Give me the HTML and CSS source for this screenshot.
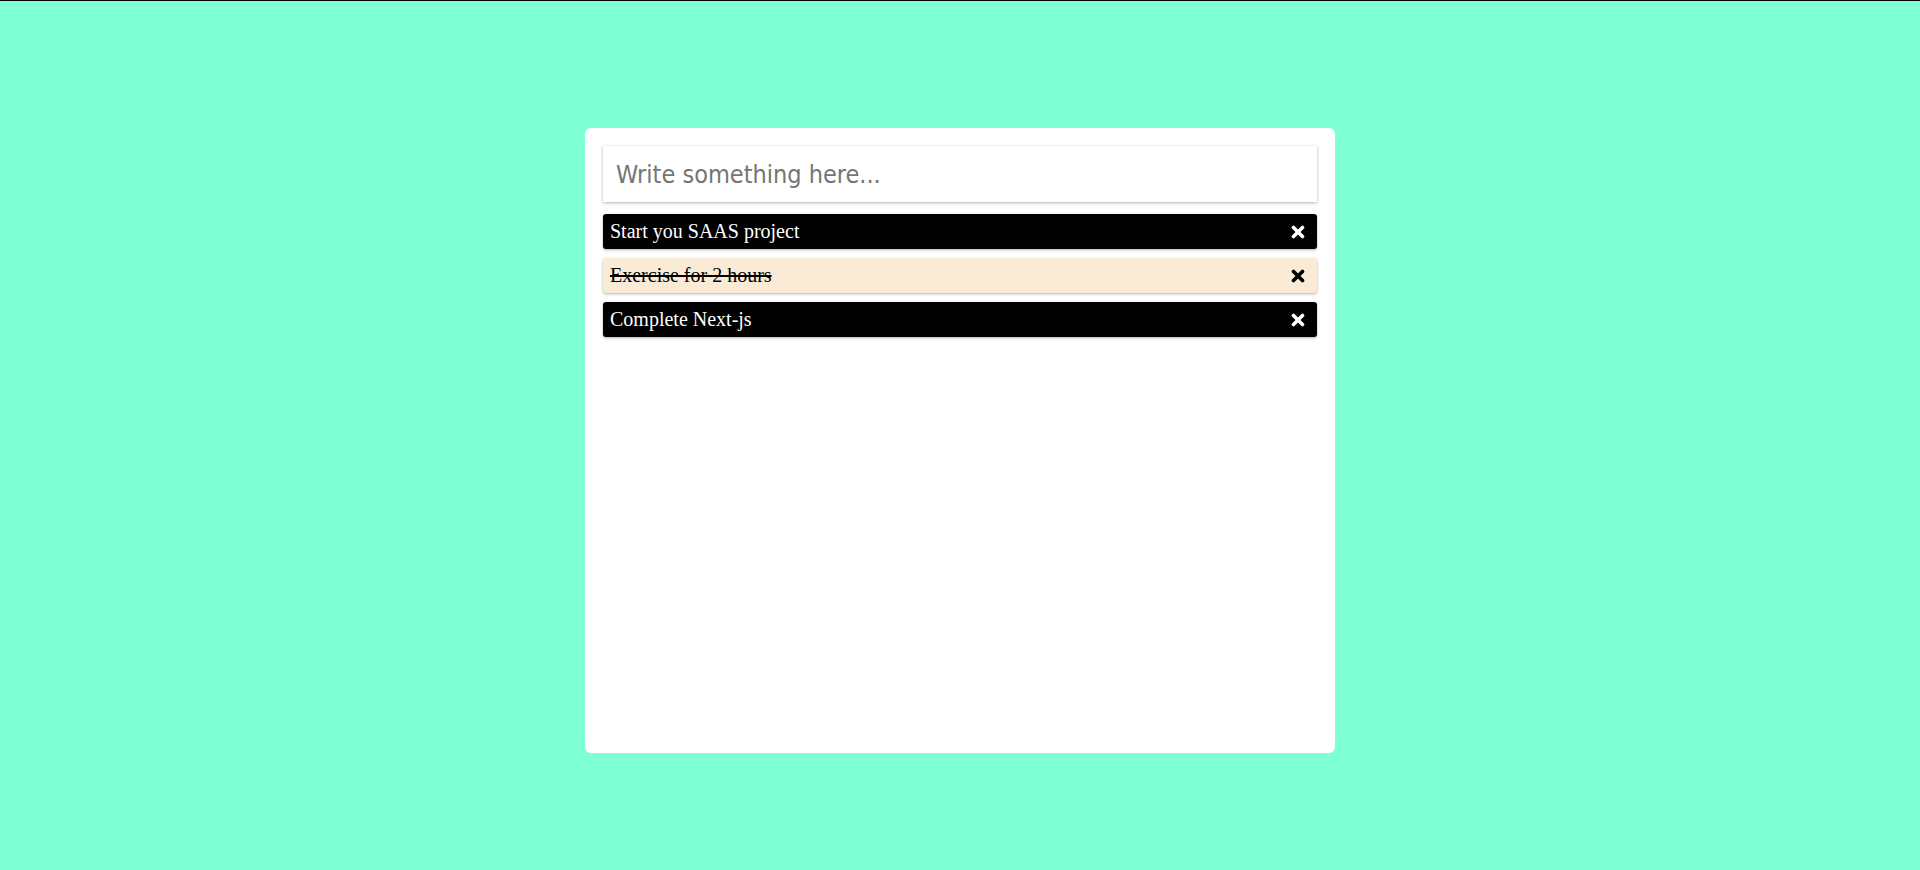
FILE: index.html
```html
<!DOCTYPE html>
<html>
<head>
<meta charset="utf-8">
<link rel="stylesheet" href="styles.css">
</head>
<body>
<div class="page">
  <div class="card">
    <input class="entry" type="text" placeholder="Write something here...">
    <ul class="list">
      <li class="item">
        <span class="label">Start you SAAS project</span>
        <svg class="x" viewBox="0 0 14 14"><path d="M2.5 2.5 L11.5 11.5 M11.5 2.5 L2.5 11.5"/></svg>
      </li>
      <li class="item done">
        <span class="label">Exercise for 2 hours</span>
        <svg class="x" viewBox="0 0 14 14"><path d="M2.5 2.5 L11.5 11.5 M11.5 2.5 L2.5 11.5"/></svg>
      </li>
      <li class="item">
        <span class="label">Complete Next-js</span>
        <svg class="x" viewBox="0 0 14 14"><path d="M2.5 2.5 L11.5 11.5 M11.5 2.5 L2.5 11.5"/></svg>
      </li>
    </ul>
  </div>
</div>
</body>
</html>
```
FILE: styles.css
```css
html, body {
  margin: 0;
  padding: 0;
  height: 100%;
}
body {
  background: #7fffd4;
  border-top: 1px solid #000;
  box-sizing: border-box;
  font-family: "Liberation Serif", "Times New Roman", serif;
}
.page {
  display: flex;
  justify-content: center;
  padding-top: 127px;
}
.card {
  width: 750px;
  height: 625px;
  box-sizing: border-box;
  background: #fff;
  border-radius: 6px;
  padding: 18px;
  display: flex;
  flex-direction: column;
}
.entry {
  height: 56px;
  box-sizing: border-box;
  border: none;
  outline: none;
  padding: 0 13px;
  font-family: "DejaVu Sans Condensed", "DejaVu Sans", sans-serif;
  font-size: 25px;
  color: #333;
  box-shadow: 0 1px 3px rgba(0, 0, 0, 0.3);
}
.entry::placeholder {
  color: #757575;
}
.list {
  list-style: none;
  margin: 12px 0 0;
  padding: 0;
  display: flex;
  flex-direction: column;
  gap: 9px;
}
.item {
  height: 35px;
  background: #000;
  color: #fff;
  border-radius: 3px;
  box-shadow: 0 1px 3px rgba(0, 0, 0, 0.3);
  display: flex;
  align-items: center;
  justify-content: space-between;
  padding: 0 12px 0 7px;
  font-size: 20px;
}
.item.done {
  background: #faebd7;
  color: #000;
}
.item.done .label {
  text-decoration: line-through;
}
.x {
  width: 14px;
  height: 14px;
  fill: none;
  stroke: #fff;
  stroke-width: 3.6;
  stroke-linecap: round;
}
.item.done .x {
  stroke: #000;
}
```
